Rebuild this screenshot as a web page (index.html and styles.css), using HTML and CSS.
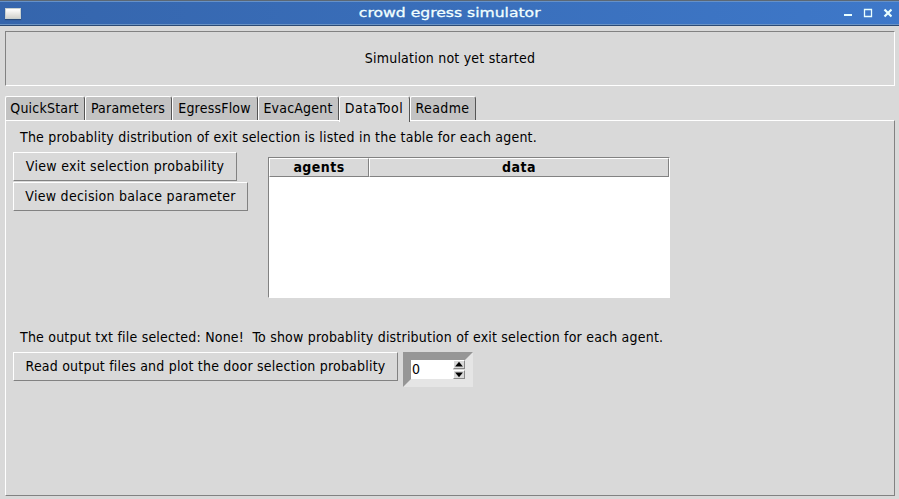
FILE: index.html
```html
<!DOCTYPE html>
<html lang="en">
<head>
<meta charset="utf-8">
<title>crowd egress simulator</title>
<link rel="stylesheet" href="styles.css">
</head>
<body>
<header class="titlebar">
  <span class="app-icon"></span>
  <h1><span>crowd egress simulator</span></h1>
  <svg class="controls" width="52" height="14" viewBox="0 0 52 14">
    <path d="M4 9h8" stroke="#eaffff" stroke-width="2"/>
    <path d="M24.500 3.500h7v7h-7zM24 3.500h8" fill="none" stroke="#eaffff" stroke-width="1.300"/>
    <path d="M44.500 3.500l7 7M51.500 3.500l-7 7" stroke="#eaffff" stroke-width="2.200"/>
  </svg>
</header>
<main>
  <section class="status">Simulation not yet started</section>
  <nav class="tabs">
    <span class="tab t1">QuickStart</span>
    <span class="tab t2">Parameters</span>
    <span class="tab t3">EgressFlow</span>
    <span class="tab t4">EvacAgent</span>
    <span class="tab t5 active">DataTool</span>
    <span class="tab t6">Readme</span>
  </nav>
  <section class="panel">
    <p>The probablity distribution of exit selection is listed in the table for each agent.</p>
    <div class="row upper">
      <div class="buttons">
        <button class="b1">View exit selection probability</button>
        <button class="b2">View decision balace parameter</button>
      </div>
      <div class="table">
        <div class="thead"><span>agents</span><span>data</span></div>
      </div>
    </div>
    <p>The output txt file selected: None!&nbsp; To show probablity distribution of exit selection for each agent.</p>
    <div class="row">
      <button class="b3">Read output files and plot the door selection probablity</button>
      <div class="spin">
        <span class="value">0</span>
        <span class="arrows">
          <svg width="12" height="9" viewBox="0 0 12 9"><path d="M1 7h10L6 1z"/></svg>
          <svg width="12" height="9" viewBox="0 0 12 9"><path d="M1 2h10L6 8z"/></svg>
        </span>
      </div>
    </div>
  </section>
</main>
</body>
</html>
```
FILE: styles.css
```css
* { box-sizing: border-box; }
body {
  margin: 0;
  height: 499px;
  overflow: hidden;
  background: #d9d9d9;
  color: #000;
  font: 14px/20px "DejaVu Sans Condensed", "DejaVu Sans", sans-serif;
  font-stretch: condensed;
  letter-spacing: .208px;
}
.titlebar {
  display: flex;
  align-items: center;
  height: 26px;
  padding: 0 5px;
  border-top: 1px solid #5c6874;
  border-bottom: 1px solid #2b4a75;
  box-shadow: inset 0 1px #6591c9, inset 0 -1px #6b93c4;
  background: linear-gradient(90deg, #3565ac, #3e78c9);
}
.app-icon {
  width: 16px;
  height: 11px;
  margin-top: 1px;
  border: 1px solid #c8d0d0;
  background: linear-gradient(#fff, #d3d3ce);
  box-shadow: 0 1px 1px #294b7b;
}
h1 {
  flex: 1;
  margin: 0;
  padding-left: 39px;
  color: #f1ffff;
  font: 13px/22px "DejaVu Sans", sans-serif;
  letter-spacing: 0;
  text-align: center;
}
h1 span { display: inline-block; transform: scaleX(1.2); -webkit-text-stroke: .3px #f1ffff; }
.controls { margin-right: 2px; }
main { padding: 5px 4px 0 5px; }
.status {
  height: 55px;
  border: 1px solid;
  border-color: #828282 #fff #fff #828282;
  line-height: 53px;
  text-align: center;
}
.tabs { display: flex; height: 25px; margin-top: 10px; }
.tab {
  height: 24px;
  padding-right: 1px;
  border: 1px solid;
  border-color: #fff #555 transparent #fff;
  border-bottom: 0;
  border-radius: 2px 3px 0 0;
  background: #c3c3c3;
  line-height: 23px;
  text-align: center;
  white-space: nowrap;
}
.tab.active { position: relative; height: 26px; background: #d9d9d9; }
.t1 { width: 80px; }
.t2 { width: 87px; }
.t3 { width: 86px; }
.t4 { width: 81px; }
.t5 { width: 71px; letter-spacing: .5px; }
.t6 { width: 66px; letter-spacing: .4px; }
.panel {
  height: 376px;
  margin-top: -1px;
  padding: 6px 7px;
  border: 1px solid;
  border-color: #fff #828282 #828282 #fff;
}
p { height: 20px; margin: 0 0 5px 7px; white-space: pre; }
.row { display: flex; align-items: flex-start; }
.upper { height: 175px; }
.buttons { display: flex; flex-direction: column; gap: 1px; width: 255px; }
button {
  height: 29px;
  padding: 0 0 2px;
  border: 1px solid;
  border-color: #fff #828282 #828282 #fff;
  background: #d9d9d9;
  color: #000;
  font: inherit;
  letter-spacing: inherit;
  white-space: nowrap;
}
.b1 { width: 224px; letter-spacing: .3px; }
.b2 { width: 235px; letter-spacing: .28px; }
.b3 { width: 385px; }
.table {
  width: 402px;
  height: 141px;
  margin-top: 5px;
  border: 1px solid;
  border-color: #828282 #fff #fff #828282;
  background: #fff;
}
.thead { display: flex; height: 19px; font-weight: bold; letter-spacing: .45px; line-height: 16px; text-align: center; }
.thead span {
  width: 100px;
  border: 1px solid;
  border-color: #fff #828282 #828282 #fff;
  background: #d9d9d9;
}
.thead span + span { width: 300px; }
.spin {
  display: flex;
  width: 70px;
  height: 35px;
  margin-left: 5px;
  border: 8px solid;
  border-color: #969696 #e5e5e5 #e5e5e5 #969696;
  background: #d9d9d9;
}
.value { width: 43px; padding-left: 1px; background: #fff; line-height: 19px; }
.arrows { display: flex; flex-direction: column; width: 12px; gap: 1px; }
.arrows svg {
  display: block;
  border: 1px solid;
  border-color: #fff #888 #888 #fff;
}
```
